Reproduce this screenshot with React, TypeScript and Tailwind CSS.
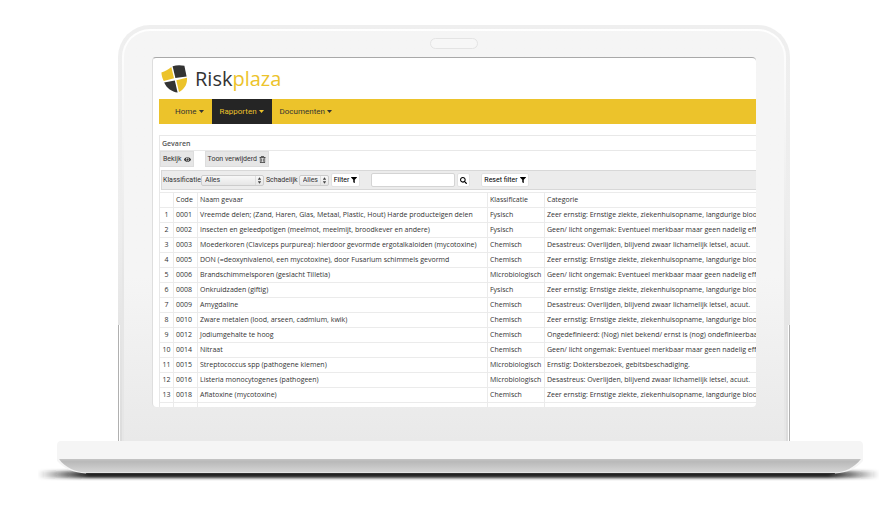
import { FaEye, FaFilter, FaRegTrashAlt, FaSearch } from 'react-icons/fa'

interface Hazard {
  code: string
  name: string
  type: string
  category: string
}

const FATAL = 'Desastreus: Overlijden, blijvend zwaar lichamelijk letsel, acuut.'
const SEVERE =
  'Zeer ernstig: Ernstige ziekte, ziekenhuisopname, langdurige blootstelling'
const MINOR =
  'Geen/ licht ongemak: Eventueel merkbaar maar geen nadelig effect'

const hazards: Hazard[] = [
  {
    code: '0001',
    name: 'Vreemde delen; (Zand, Haren, Glas, Metaal, Plastic, Hout) Harde producteigen delen',
    type: 'Fysisch',
    category: SEVERE,
  },
  {
    code: '0002',
    name: 'Insecten en geleedpotigen (meelmot, meelmijt, broodkever en andere)',
    type: 'Fysisch',
    category: MINOR,
  },
  {
    code: '0003',
    name: 'Moederkoren (Claviceps purpurea): hierdoor gevormde ergotalkaloiden (mycotoxine)',
    type: 'Chemisch',
    category: FATAL,
  },
  {
    code: '0005',
    name: 'DON (=deoxynivalenol, een mycotoxine), door Fusarium schimmels gevormd',
    type: 'Chemisch',
    category: SEVERE,
  },
  { code: '0006', name: 'Brandschimmelsporen (geslacht Tilletia)', type: 'Microbiologisch', category: MINOR },
  { code: '0008', name: 'Onkruidzaden (giftig)', type: 'Fysisch', category: SEVERE },
  { code: '0009', name: 'Amygdaline', type: 'Chemisch', category: FATAL },
  { code: '0010', name: 'Zware metalen (lood, arseen, cadmium, kwik)', type: 'Chemisch', category: SEVERE },
  {
    code: '0012',
    name: 'Jodiumgehalte te hoog',
    type: 'Chemisch',
    category: 'Ongedefinieerd: (Nog) niet bekend/ ernst is (nog) ondefinieerbaar',
  },
  { code: '0014', name: 'Nitraat', type: 'Chemisch', category: MINOR },
  {
    code: '0015',
    name: 'Streptococcus spp (pathogene kiemen)',
    type: 'Microbiologisch',
    category: 'Ernstig: Doktersbezoek, gebitsbeschadiging.',
  },
  { code: '0016', name: 'Listeria monocytogenes (pathogeen)', type: 'Microbiologisch', category: FATAL },
  { code: '0018', name: 'Aflatoxine (mycotoxine)', type: 'Chemisch', category: SEVERE },
  {
    code: '0019',
    name: 'Staphylococcus aureus toxine vormend (hittestabiel)',
    type: 'Microbiologisch',
    category: SEVERE,
  },
]

export default function App() {
  return (
    <div className="min-h-screen bg-white pt-[25px] pl-[38px] font-['Open_Sans',sans-serif] text-[7px] text-[#333]">
      <div className="relative mr-[89px] ml-[80px] rounded-t-[32px] bg-gradient-to-b from-[#efefef] via-[#ededed] to-[#dcdcdc] px-1 pt-1">
        <div className="rounded-t-[28px] bg-gradient-to-b from-white to-[#e6e6e6] to-60% px-0.5 pt-0.5">
          <div className="rounded-t-[26px] bg-gradient-to-b from-[#f5f5f5] from-60% to-[#e9e9e9] px-7 pt-[7px] pb-[34px]">
            <div className="mx-auto mb-2 h-[11px] w-12 rounded-full border border-[#e4e4e4] bg-[#f7f7f7]" />
            <Screen />
          </div>
        </div>
        {/* metal edge on the lower part of the lid */}
        <span className="absolute bottom-0 left-0 h-[116px] w-0.5 border-l border-[#b0b0b0] bg-white" />
        <span className="absolute right-0 bottom-0 h-[116px] w-0.5 border-r border-[#b0b0b0] bg-white" />
      </div>
      <LaptopBase />
    </div>
  )
}

function Screen() {
  return (
    <div className="aspect-[604/350] overflow-hidden rounded-[4px] border-t border-l border-t-[#a9a9a9] border-l-[#dedede] bg-white pl-1.5">
      <header className="flex h-[41px] items-center gap-2 pl-0.5">
        <Logo />
        <span className="text-[20px] leading-none text-[#333]">
          Risk<span className="text-[#ecc32b]">plaza</span>
        </span>
      </header>

      <nav className="flex h-[25px] bg-[#ecc32b] pl-2">
        <NavItem label="Home" />
        <NavItem label="Rapporten" active />
        <NavItem label="Documenten" />
      </nav>

      <main className="mt-[11px] border-t border-l border-[#e8e8e8]">
        <h1 className="h-[15px] border-b border-[#e8e8e8] pl-0.5 leading-[15px] font-semibold text-[#555]">
          Gevaren
        </h1>
        <div className="flex gap-[11px] font-[Roboto,sans-serif]">
          <ToolButton>
            Bekijk <FaEye className="size-[7px] shrink-0" />
          </ToolButton>
          <ToolButton>
            Toon verwijderd <FaRegTrashAlt className="size-[7px] shrink-0" />
          </ToolButton>
        </div>
        <FilterBar />
        <HazardTable />
      </main>
    </div>
  )
}

function NavItem({ label, active = false }: { label: string; active?: boolean }) {
  const look = active ? 'bg-[#252525] text-[#ecc32b]' : 'text-[#333]'
  return (
    <a
      href="#"
      className={`flex items-center gap-0.5 px-2 font-[Roboto,sans-serif] text-[8px] ${look}`}
    >
      {label}
      <svg viewBox="0 0 5 3" className="h-[3px] w-[5px]" aria-hidden="true">
        <path d="M0 0h5L2.5 3z" fill="currentColor" />
      </svg>
    </a>
  )
}

function ToolButton({ children }: { children: React.ReactNode }) {
  return (
    <button className="flex h-4 items-center gap-0.5 border border-[#ddd] bg-[#e6e6e6] px-0.5">
      {children}
    </button>
  )
}

function FilterBar() {
  const button = 'flex h-[14px] items-center gap-0.5 rounded-[2px] border border-[#e2e2e2] bg-white px-0.5 text-black'
  return (
    <form className="mt-[3px] mb-0.5 ml-px flex h-5 items-center border-y border-l border-[#d8d8d8] bg-[#ececec] pl-px font-[Roboto,sans-serif]">
      <label htmlFor="type">Klassificatie</label>
      <Select id="type" width="w-[63px]" />
      <label htmlFor="harmful" className="mr-px ml-0.5">Schadelijk</label>
      <Select id="harmful" width="w-[30px]" />
      <button type="button" className={`ml-0.5 ${button}`}>
        Filter <FaFilter className="size-[6px]" />
      </button>
      <input
        aria-label="Zoeken"
        className="ml-[11px] h-[14px] w-[84px] rounded-[2px] border border-[#d4d4d4] bg-white"
      />
      <button type="button" aria-label="Zoek" className={`ml-0.5 ${button}`}>
        <FaSearch className="size-[7px]" />
      </button>
      <button type="button" className={`ml-[11px] ${button}`}>
        Reset filter <FaFilter className="size-[6px]" />
      </button>
    </form>
  )
}

function Select({ id, width }: { id: string; width: string }) {
  return (
    <span className={`relative flex ${width}`}>
      <select
        id={id}
        className="h-[11px] w-full appearance-none rounded-[2px] border border-[#ccc] bg-gradient-to-b from-[#f8f8f8] to-[#e6e6e6] pl-[3px] leading-[9px]"
      >
        <option>Alles</option>
      </select>
      <svg viewBox="0 0 8 9" className="pointer-events-none absolute top-px right-px h-[9px] w-2">
        <path d="M0.5 0v9" stroke="#d0d0d0" strokeWidth="0.6" />
        <path d="M4.5 1.2 6.2 3.8H2.8zM4.5 7.8 6.2 5.2H2.8z" fill="#444" />
      </svg>
    </span>
  )
}

function HazardTable() {
  const cell = 'border-t border-l border-[#ebebeb] p-0 pl-0.5 text-left font-normal'
  return (
    <table className="w-full table-fixed border-separate border-spacing-0 leading-[14px] whitespace-nowrap">
      <colgroup>
        <col className="w-[13px]" />
        <col className="w-[24px]" />
        <col className="w-[290px]" />
        <col className="w-[57px]" />
        <col />
      </colgroup>
      <thead>
        <tr>
          <th className="border-t border-[#ebebeb] p-0" />
          <th className={cell}>Code</th>
          <th className={cell}>Naam gevaar</th>
          <th className={cell}>Klassificatie</th>
          <th className={cell}>Categorie</th>
        </tr>
      </thead>
      <tbody>
        {hazards.map((h, i) => (
          <tr key={h.code}>
            <td className="border-t border-[#ebebeb] p-0 text-center">{i + 1}</td>
            <td className={cell}>{h.code}</td>
            <td className={cell}>{h.name}</td>
            <td className={cell}>{h.type}</td>
            <td className={`${cell} overflow-hidden`}>{h.category}</td>
          </tr>
        ))}
      </tbody>
    </table>
  )
}

function Logo() {
  return (
    <svg viewBox="0 0 26 28" className="h-7 w-[26px]" aria-hidden="true">
      <path d="M0.4 7.4C4 6.2 7.4 4.4 10.3 2L13 13.2 2.8 16C1.4 13.2 0.6 10.4 0.4 7.4z" fill="#ecc32b" />
      <path d="M11.6 1.2C15.4 0 19.6 0 23.4 0.8L25.6 11.6 14.4 12.9z" fill="#333" />
      <path d="M3.2 17.6 13.8 15.6 16.6 27.6C11 27 5.6 23.4 3.2 17.6z" fill="#333" />
      <path d="M15.3 15.2 25.9 12.8C26.6 19 23.4 24 18 27z" fill="#ecc32b" />
    </svg>
  )
}

function LaptopBase() {
  return (
    <svg viewBox="0 0 840 44" className="block w-full" aria-hidden="true">
      <defs>
        <linearGradient id="side" x1="0" x2="0" y1="0" y2="1">
          <stop offset="0" stopColor="#c4c4c4" />
          <stop offset="0.2" stopColor="#b9b9b9" />
          <stop offset="1" stopColor="#d6d6d6" />
        </linearGradient>
        <linearGradient id="shadow" x1="0" x2="1" y1="0" y2="0">
          <stop offset="0" stopColor="#222" stopOpacity="0" />
          <stop offset="0.06" stopColor="#222" />
          <stop offset="0.94" stopColor="#222" />
          <stop offset="1" stopColor="#222" stopOpacity="0" />
        </linearGradient>
        <filter id="soft" x="-5%" y="-100%" width="110%" height="300%">
          <feGaussianBlur stdDeviation="2 1.6" />
        </filter>
      </defs>
      <rect x="0" y="30" width="840" height="7" rx="3" fill="url(#shadow)" filter="url(#soft)" />
      <path d="M19 4Q19 0 23 0H820Q824 0 824 4V20C818 27 808 32 796 32.5H48C36 32 25 27 19 20z" fill="#f5f5f5" />
      <path d="M21 18H822C815 27 806 31 796 31.5H48C38 31 27 27 21 18z" fill="url(#side)" />
      <path d="M48 32.5H796" stroke="#333" strokeWidth="1" />
    </svg>
  )
}
